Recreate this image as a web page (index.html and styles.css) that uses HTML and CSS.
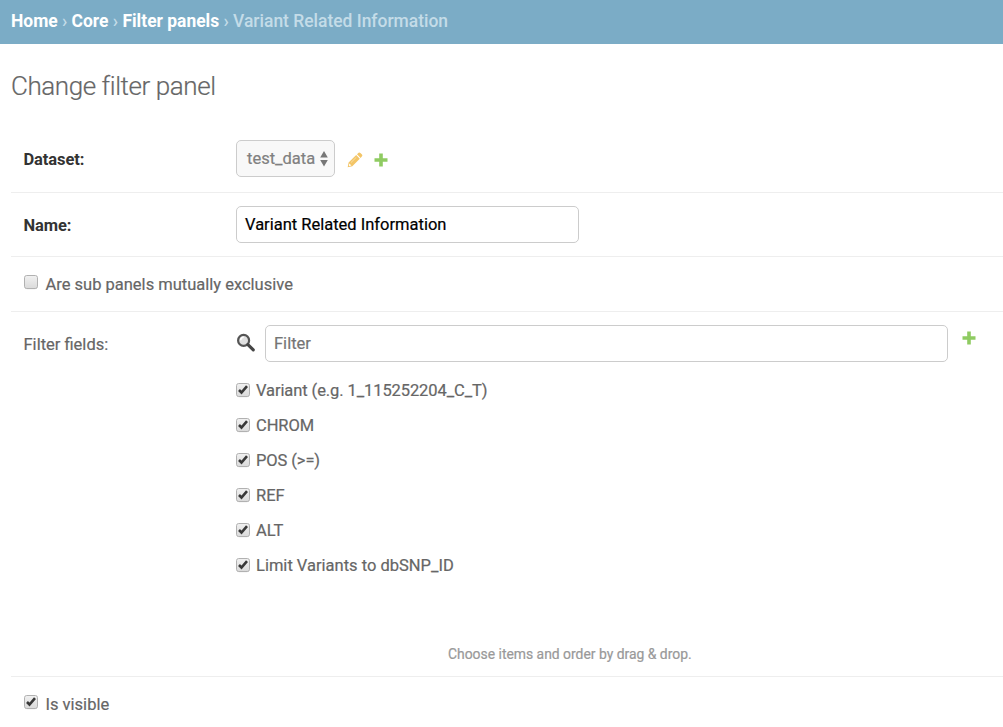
FILE: index.html
```html
<!DOCTYPE html>
<html lang="en">
<head>
<meta charset="utf-8">
<title>Change filter panel</title>
<link rel="stylesheet" href="styles.css">
</head>
<body>
<svg class="defs" width="0" height="0" aria-hidden="true">
  <linearGradient id="box" x1="0" y1="0" x2="0" y2="1"><stop offset="0" stop-color="#f1f1f1"/><stop offset="1" stop-color="#dadada"/></linearGradient>
  <symbol id="check-off" viewBox="0 0 14 15"><rect x=".6" y="1" width="12.8" height="13.3" rx="2.4" fill="#ddd"/><rect x=".5" y=".5" width="13" height="13" rx="2.2" fill="url(#box)" stroke="#b1b1b1"/></symbol>
  <symbol id="check-on" viewBox="0 0 14 15"><use href="#check-off"/><path d="M3 7 5.5 9.5 11 3.2" fill="none" stroke="#383838" stroke-width="2.6"/></symbol>
  <symbol id="plus" viewBox="0 0 14 14"><path d="M5.2.5h3.6v4.7h4.7v3.6H8.8v4.7H5.2V8.8H.5V5.2h4.7z" fill="#8fcb62"/></symbol>
</svg>
<nav class="breadcrumbs"><a>Home</a> › <a>Core</a> › <a>Filter panels</a> › Variant Related Information</nav>
<main class="content">
  <h1 class="title">Change filter panel</h1>
  <div class="row row-dataset">
    <label class="label strong">Dataset:</label>
    <div class="select"><span class="select-text">test_data</span><svg width="8" height="16" viewBox="0 0 8 16"><path d="M4 0 7.8 6.4H.2zM4 15.5.2 9.1h7.6z" fill="#777"/></svg></div>
    <svg class="edit" width="16" height="16" viewBox="0 0 16 16"><path d="M.7 15.2 1.6 10.6 9.2 3.1 12.8 6.7 5.3 14.2zM10 2.3 11.6.8Q12.5.1 13.4.9L15 2.5Q15.8 3.4 15 4.3L13.6 5.9z" fill="#f3c567"/><path d="m2.4 11.5 2 2-2 .5-.6-.6z" fill="#fff"/><path d="m4 10.5 5.3-5.2" stroke="#fbe4b2" stroke-width=".8"/></svg>
    <svg class="add" width="14" height="14"><use href="#plus"/></svg>
  </div>
  <div class="row row-name">
    <label class="label strong">Name:</label>
    <div class="input name"><span>Variant Related Information</span></div>
  </div>
  <div class="row row-exclusive">
    <svg class="check" width="14" height="15"><use href="#check-off"/></svg><span class="check-label exclusive-text">Are sub panels mutually exclusive</span>
  </div>
  <div class="row row-fields">
    <label class="label">Filter fields:</label>
    <div class="fields">
      <div class="search">
        <svg class="lens" width="20" height="20" viewBox="0 0 20 20"><circle cx="7.6" cy="7.4" r="5.5" fill="#e0e0e0" stroke="#555" stroke-width="2.2"/><path d="M4.7 7.2A3 3 0 0 1 7.7 4.3" fill="none" stroke="#fff" stroke-width="1.5"/><path d="m11.9 11.7 5.4 5.2" stroke="#454545" stroke-width="3.2" stroke-linecap="round"/></svg>
        <div class="input filter"><span>Filter</span></div>
      </div>
      <ul class="list">
        <li><svg width="14" height="15"><use href="#check-on"/></svg><span class="tight">Variant (e.g. 1_115252204_C_T)</span></li>
        <li><svg width="14" height="15"><use href="#check-on"/></svg><span class="tight">CHROM</span></li>
        <li><svg width="14" height="15"><use href="#check-on"/></svg><span class="tight">POS (&gt;=)</span></li>
        <li><svg width="14" height="15"><use href="#check-on"/></svg><span>REF</span></li>
        <li><svg width="14" height="15"><use href="#check-on"/></svg><span>ALT</span></li>
        <li><svg width="14" height="15"><use href="#check-on"/></svg><span>Limit Variants to dbSNP_ID</span></li>
      </ul>
      <p class="help">Choose items and order by drag &amp; drop.</p>
    </div>
    <svg class="add-field" width="14" height="14"><use href="#plus"/></svg>
  </div>
  <div class="row row-visible">
    <svg class="check" width="14" height="15"><use href="#check-on"/></svg><span class="check-label">Is visible</span>
  </div>
</main>
</body>
</html>
```
FILE: styles.css
```css
* { box-sizing: border-box; }
body { margin: 0; background: #fff; color: #666; font: 16.5px/20px Roboto, sans-serif; -webkit-text-stroke: .2px; height: 727px; overflow: hidden; white-space: nowrap; }
.defs { position: absolute; }
.breadcrumbs { height: 44px; padding: 11px 11px 0; background: #7bacc6; color: #c4dce8; font-size: 17.45px; font-weight: 500; -webkit-text-stroke: 0; }
.breadcrumbs a { color: #fff; font-weight: 700; }
.content { padding-left: 11px; }
.title { margin: 0; height: 82px; padding-top: 26px; font-size: 26px; line-height: 32px; font-weight: 300; letter-spacing: -.43px; }
.row { display: flex; align-items: flex-start; padding-left: 12.5px; border-bottom: 1px solid #eee; }
.label { width: 212.5px; flex: none; }
.strong { color: #333; font-weight: 700; letter-spacing: -.1px; -webkit-text-stroke: 0; }
.row-dataset { height: 67px; padding-top: 14px; }
.row-dataset .label { padding-top: 10px; }
.select { display: flex; align-items: center; justify-content: space-between; width: 99px; height: 37px; padding: 0 6px 0 10px; border: 1px solid #ccc; border-radius: 5px; background: #f8f8f8; color: #808080; }
.edit { margin: 12px 0 0 12px; }
.add { margin: 12.5px 0 0 10.5px; }
.row-name { height: 64px; padding-top: 13px; }
.row-name .label { padding-top: 10px; }
.input { height: 37px; padding: 8px; border: 1px solid #ccc; border-radius: 5px; line-height: 19px; }
.name { width: 343px; color: #000; }
.row-exclusive { height: 55px; padding-top: 18px; }
.check { flex: none; }
.check-label { padding-left: 8px; }
.row-fields { height: 365px; padding-top: 13px; }
.row-fields .label { padding-top: 10px; }
.fields { width: 712px; }
.search { display: flex; }
.lens { margin: 8px 9px 0 0; }
.filter { width: 683px; color: #757575; }
.list { margin: 11px 0 0; padding: 0; list-style: none; }
.list li { display: flex; height: 35px; padding-top: 8px; }
.list svg { margin-top: 2px; }
.list span { padding-left: 6px; }
.tight { letter-spacing: -.09px; }
.help { width: 244px; margin: 61px 0 0 212px; color: #999; font-size: 13.9px; }
.add-field { margin: 5.5px 0 0 14px; }
.row-visible { border: 0; height: 50px; padding-top: 18px; }
```
